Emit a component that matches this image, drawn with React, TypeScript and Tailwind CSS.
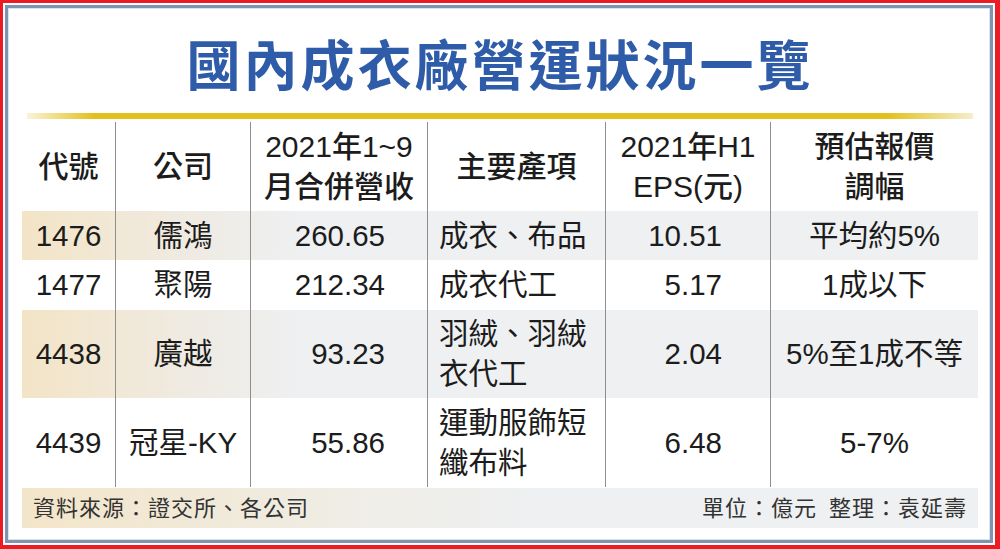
const rows = [
  { code: "1476", name: "儒鴻", rev: "260.65", items: ["成衣、布品"], eps: "10.51", adj: "平均約5%", shade: true, h: "h-[49px]" },
  { code: "1477", name: "聚陽", rev: "212.34", items: ["成衣代工"], eps: "5.17", adj: "1成以下", shade: false, h: "h-[50px]" },
  { code: "4438", name: "廣越", rev: "93.23", items: ["羽絨、羽絨", "衣代工"], eps: "2.04", adj: "5%至1成不等", shade: true, h: "h-[88px]" },
  { code: "4439", name: "冠星-KY", rev: "55.86", items: ["運動服飾短", "纖布料"], eps: "6.48", adj: "5-7%", shade: false, h: "h-[89px]" },
];

const grid = "grid grid-cols-[93px_135px_177px_178px_165px_1fr]";
const line = "border-l border-[#8e8e8e]";

export default function App() {
  return (
    <div className="h-[549px] w-[1000px] border-t-[3px] border-l-[3px] border-r-[5px] border-b-[4px] border-[#ec1c24] bg-white p-[2px] font-['Liberation_Sans','Noto_Sans_CJK_TC',sans-serif] text-[#1c1c1c]">
      <div className="flex h-full flex-col border-[3px] border-[#8094b0] pl-[14px] pr-[12px] shadow-[inset_0_0_0_1px_#d6e4f2]">
        <div className="flex h-[105px] items-center justify-center pt-[4px]">
          <h1 className="font-['Noto_Sans_CJK_TC',sans-serif] text-[54px] font-bold leading-none tracking-[3px] text-[#2f5ca9]">
            國內成衣廠營運狀況一覽
          </h1>
        </div>
        <div className="mx-[5px] h-[6px] bg-[linear-gradient(to_right,#fbf3d8,#e2c11f_7%,#e2c11f_91%,#f6edcc)]" />

        <div className={`${grid} h-[92px] pt-[3px] text-[30px] font-medium`}>
          <div className="flex items-center justify-center">代號</div>
          <div className={`${line} flex items-center justify-center`}>公司</div>
          <div className={`${line} flex flex-col items-center justify-center leading-[40px]`}>
            <span>2021年1~9</span>
            <span>月合併營收</span>
          </div>
          <div className={`${line} flex items-center justify-center`}>主要產項</div>
          <div className={`${line} flex flex-col items-center justify-center leading-[40px]`}>
            <span>2021年H1</span>
            <span>EPS(元)</span>
          </div>
          <div className={`${line} flex flex-col items-center justify-center leading-[40px]`}>
            <span>預估報價</span>
            <span>調幅</span>
          </div>
        </div>

        {rows.map((r) => (
          <div
            key={r.code}
            className={`${grid} ${r.h} text-[29.5px] leading-[40px] ${
              r.shade ? "bg-[linear-gradient(to_right,#f3e4c6,#efebe3_18%,#eef0f2_30%)]" : "bg-white"
            }`}
          >
            <div className="flex items-center justify-center">{r.code}</div>
            <div className={`${line} flex items-center justify-center`}>{r.name}</div>
            <div className={`${line} flex items-center justify-end pr-[42px]`}>{r.rev}</div>
            <div className={`${line} flex flex-col justify-center pl-[11px]`}>
              {r.items.map((t) => (
                <span key={t}>{t}</span>
              ))}
            </div>
            <div className={`${line} flex items-center justify-end pr-[48px]`}>{r.eps}</div>
            <div className={`${line} flex items-center justify-center`}>{r.adj}</div>
          </div>
        ))}

        <div className="mt-[1px] flex h-[40px] items-center justify-between bg-[linear-gradient(to_right,#f3e5c9,#efede6_35%,#eef0f2_55%)] px-[11px] text-[22px] tracking-[1px] text-[#333]">
          <span>資料來源：證交所、各公司</span>
          <span>
            單位：億元<span className="ml-[12px]">整理：袁延壽</span>
          </span>
        </div>
      </div>
    </div>
  );
}
